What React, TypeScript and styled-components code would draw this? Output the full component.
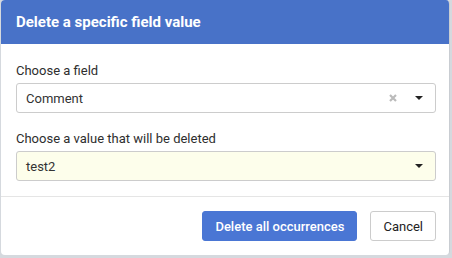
import React from 'react';
import styled, { createGlobalStyle } from 'styled-components';

const GlobalStyle = createGlobalStyle`
  html, body {
    margin: 0;
    padding: 0;
    background: #d5d9de;
    font-family: Roboto, "Liberation Sans", sans-serif;
  }
`;

const Modal = styled.div`
  width: 449px;
  height: 255px;
  margin-left: 1px;
  background: #fff;
  border-radius: 4px;
  overflow: hidden;
  display: flex;
  flex-direction: column;
  box-sizing: border-box;
  border-right: 1px solid #c9cdd2;
`;

const Header = styled.div`
  height: 44px;
  flex: none;
  background: #4872c8;
  display: flex;
  align-items: center;
  padding-left: 15px;
`;

const Title = styled.h1`
  margin: 0;
  color: #fff;
  font-size: 15px;
  font-weight: 700;
`;

const Body = styled.div`
  padding: 18px 13px 15px 15px;
  display: flex;
  flex-direction: column;
`;

const Label = styled.label`
  font-size: 13px;
  line-height: 18px;
  color: #2e2e2e;
  margin-bottom: 3px;
`;

const Select = styled.div<{ $highlight?: boolean }>`
  height: 30px;
  box-sizing: border-box;
  border: 1px solid #ccc;
  border-radius: 3px;
  background: ${(p) => (p.$highlight ? '#fdfeeb' : '#fff')};
  display: flex;
  align-items: center;
  padding: 0 12px 0 9px;
  font-size: 13px;
  color: #333;
  & + ${Label} {
    margin-top: 17px;
  }
`;

const Value = styled.span`
  flex: 1;
`;

const Clear = styled.svg`
  width: 8px;
  height: 8px;
  margin-right: 18px;
`;

const Caret = styled.span`
  width: 0;
  height: 0;
  border-left: 4px solid transparent;
  border-right: 4px solid transparent;
  border-top: 4px solid #222;
`;

const Footer = styled.div`
  border-top: 1px solid #e5e5e5;
  flex: 1;
  display: flex;
  justify-content: flex-end;
  align-items: flex-start;
  gap: 13px;
  padding: 14px 13px 0 0;
`;

const Button = styled.button<{ $primary?: boolean }>`
  height: 30px;
  padding: 0 12px;
  font-family: Roboto, "Liberation Sans", sans-serif;
  font-size: 13px;
  font-weight: ${(p) => (p.$primary ? 500 : 400)};
  border-radius: 3px;
  cursor: pointer;
  border: 1px solid ${(p) => (p.$primary ? '#4a76d4' : '#ccc')};
  background: ${(p) => (p.$primary ? '#4a76d4' : '#fff')};
  color: ${(p) => (p.$primary ? '#fff' : '#222')};
`;

export default function App() {
  return (
    <>
      <GlobalStyle />
      <Modal>
        <Header>
          <Title>Delete a specific field value</Title>
        </Header>
        <Body>
          <Label>Choose a field</Label>
          <Select>
            <Value>Comment</Value>
            <Clear viewBox="0 0 8 8">
              <path d="M1 1L7 7M7 1L1 7" stroke="#bbb" strokeWidth="2.2" />
            </Clear>
            <Caret />
          </Select>
          <Label>Choose a value that will be deleted</Label>
          <Select $highlight>
            <Value>test2</Value>
            <Caret />
          </Select>
        </Body>
        <Footer>
          <Button $primary>Delete all occurrences</Button>
          <Button>Cancel</Button>
        </Footer>
      </Modal>
    </>
  );
}
